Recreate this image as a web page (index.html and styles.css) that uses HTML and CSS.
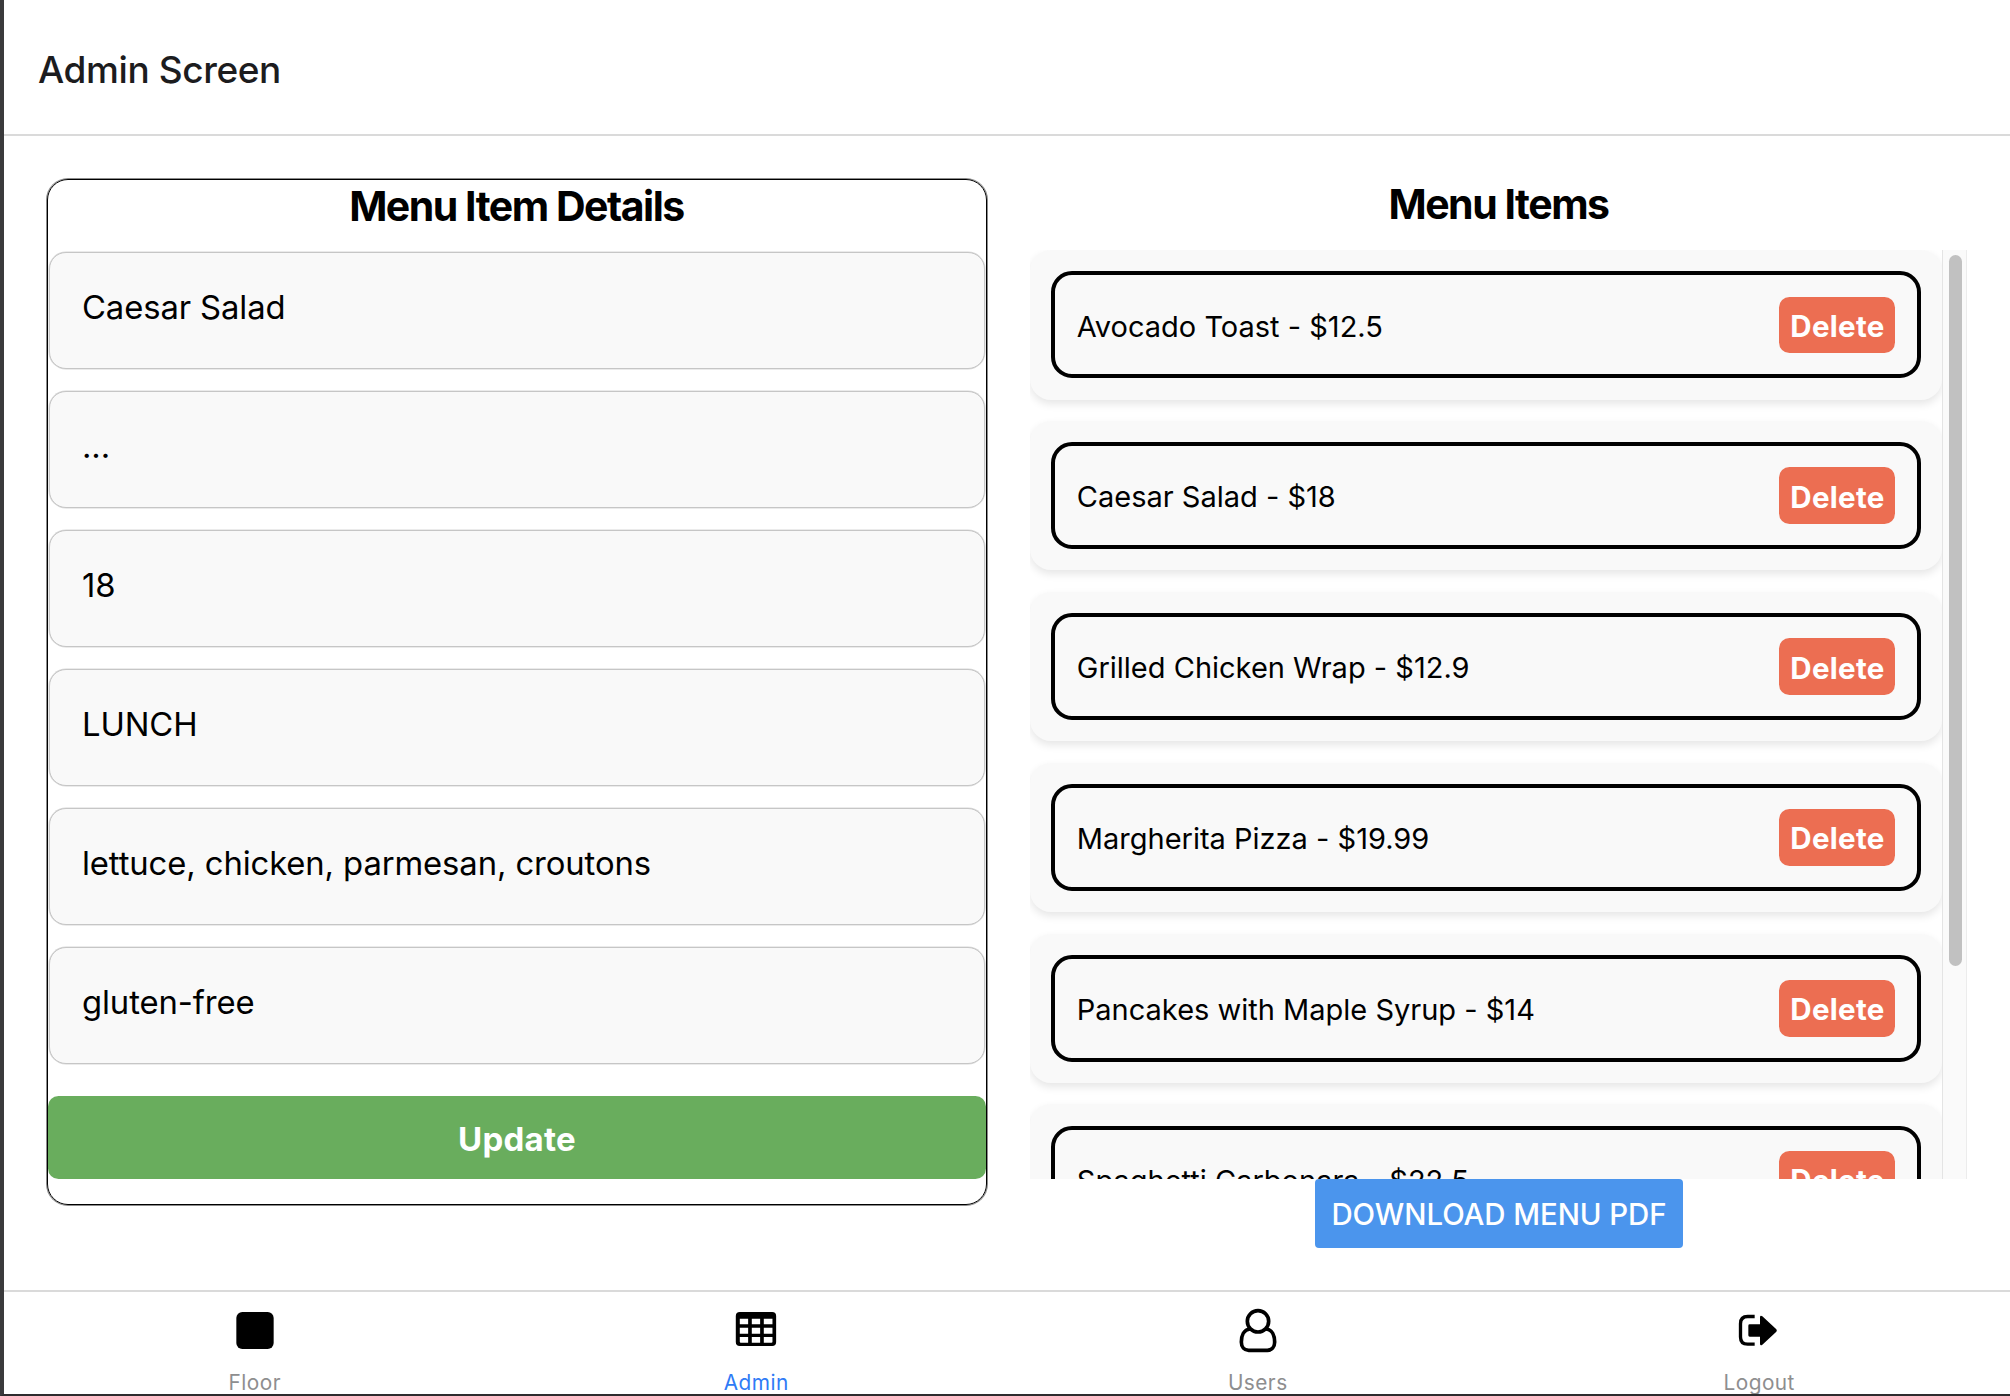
FILE: index.html
```html
<!DOCTYPE html>
<html lang="en">
<head>
<meta charset="utf-8">
<title>Admin Screen</title>
<link rel="stylesheet" href="styles.css">
</head>
<body>
<header class="header"><h1 class="header-title">Admin Screen</h1></header>
<main class="main">
  <section class="details">
    <h2 class="title">Menu Item Details</h2>
    <div class="fields">
      <div class="field">Caesar Salad</div>
      <div class="field">...</div>
      <div class="field">18</div>
      <div class="field">LUNCH</div>
      <div class="field">lettuce, chicken, parmesan, croutons</div>
      <div class="field">gluten-free</div>
    </div>
    <button class="update">Update</button>
  </section>
  <section class="items">
    <h2 class="title">Menu Items</h2>
    <div class="scroller">
      <div class="list">
        <div class="card"><div class="item"><span class="item-name">Avocado Toast - $12.5</span><button class="delete">Delete</button></div></div>
        <div class="card"><div class="item"><span class="item-name">Caesar Salad - $18</span><button class="delete">Delete</button></div></div>
        <div class="card"><div class="item"><span class="item-name">Grilled Chicken Wrap - $12.9</span><button class="delete">Delete</button></div></div>
        <div class="card"><div class="item"><span class="item-name">Margherita Pizza - $19.99</span><button class="delete">Delete</button></div></div>
        <div class="card"><div class="item"><span class="item-name">Pancakes with Maple Syrup - $14</span><button class="delete">Delete</button></div></div>
        <div class="card"><div class="item"><span class="item-name">Spaghetti Carbonara - $22.5</span><button class="delete">Delete</button></div></div>
      </div>
      <div class="track"><div class="thumb"></div></div>
    </div>
    <button class="download">DOWNLOAD MENU PDF</button>
  </section>
</main>
<nav class="tabs">
  <a class="tab">
    <svg class="icon" viewBox="92 51 144 144"><rect x="108" y="66" width="112" height="111" rx="18"/></svg>
    <span class="label">Floor</span>
  </a>
  <a class="tab tab-active">
    <svg class="icon" viewBox="96.6 51 144 144"><path fill-rule="evenodd" d="M120 66H217Q229 66 229 78V156Q229 168 217 168H120Q108 168 108 156V78Q108 66 120 66ZM120 86V103H145V86ZM156 86V103H181V86ZM192 86V103H218V86ZM120 113V131H145V113ZM156 113V131H181V113ZM192 113V131H218V113ZM120 141V155Q120 158 123 158H145V141ZM156 141V158H181V141ZM192 141V158H215Q218 158 218 155V141Z"/></svg>
    <span class="label">Admin</span>
  </a>
  <a class="tab">
    <svg class="icon" viewBox="101 51 144 144"><g fill="none" stroke="#000" stroke-width="11"><circle cx="173" cy="94" r="32"/><path d="M149 117C130 119 123 137 123 156C123 171 132 181 145 181H201C214 181 223 171 223 156C223 137 216 119 197 117"/></g></svg>
    <span class="label">Users</span>
  </a>
  <a class="tab">
    <svg class="icon" viewBox="106 51 144 144"><path fill="none" stroke="#000" stroke-width="10" d="M165 79.5H144Q122.500 79.500 122.500 101V141Q122.500 162.500 144 162.500H165"/><path d="M150 103H181V81Q182 75 188 79L230 118Q233 121.500 230 125L188 164Q182 168 181 162V140H150Q146 140 146 136V107Q146 103 150 103Z"/></svg>
    <span class="label">Logout</span>
  </a>
</nav>
</body>
</html>
```
FILE: styles.css
```css
* { box-sizing: border-box; }

body {
  margin: 0;
  width: 2010px;
  height: 1396px;
  display: flex;
  flex-direction: column;
  overflow: hidden;
  background: #fff;
  border-left: 4px solid #3a3a3c;
  border-bottom: 2px solid #2e2c2e;
  font-family: Inter, "Liberation Sans", sans-serif;
  font-feature-settings: "calt" 0;
  color: #000;
}

button {
  border: 0;
  padding: 0;
  margin: 0;
  font-family: inherit;
  color: #fff;
}

.header {
  flex: none;
  height: 136px;
  padding: 4px 0 0 34px;
  display: flex;
  align-items: center;
  border-bottom: 2px solid #dadada;
}

.header-title {
  margin: 0;
  font-size: 37px;
  font-weight: 500;
  letter-spacing: -0.4px;
  color: #1c1c1e;
}

.main {
  flex: none;
  height: 1154px;
  padding: 43px 42px 0 43px;
  display: flex;
  align-items: flex-start;
  gap: 43px;
}

.title {
  flex: none;
  margin: 0;
  padding-right: 1px;
  font-size: 41px;
  line-height: 51px;
  font-weight: 700;
  letter-spacing: -1.48px;
  text-align: center;
}

.details {
  width: 940px;
  height: 1026px;
  display: flex;
  flex-direction: column;
  border: 1px solid #000;
  border-radius: 21px;
  box-shadow: 0 0 0 1px rgba(0, 0, 0, 0.45);
}

.details .title { padding-top: 1px; }

.fields {
  display: flex;
  flex-direction: column;
  gap: 22px;
  padding: 20px 1px 0;
}

.field {
  height: 117px;
  display: flex;
  align-items: center;
  padding: 0 32px 7px;
  border: 1px solid #c6c6c6;
  border-radius: 17px;
  background: #f9f9f9;
  box-shadow: 0 0 0 0.5px #d8d8d8;
  font-size: 32.8px;
  letter-spacing: -0.1px;
}

.update {
  height: 83px;
  margin-top: 32px;
  padding-top: 3px;
  border-radius: 10.5px;
  background: #69ad5d;
  font-size: 33px;
  font-weight: 750;
  letter-spacing: 0.25px;
}

.items {
  width: 938px;
  display: flex;
  flex-direction: column;
}

.scroller {
  height: 929px;
  margin-top: 20px;
  display: flex;
  overflow: hidden;
}

.list {
  width: 912px;
  height: 929px;
  display: flex;
  flex-direction: column;
  gap: 21.4px;
  overflow: hidden;
}

.card {
  flex: none;
  height: 149.5px;
  padding: 21.3px;
  border-radius: 21px;
  background: #f9f9f9;
  box-shadow: 0 4px 8px rgba(0, 0, 0, 0.1);
}

.item {
  height: 107px;
  padding: 0 21.5px;
  display: flex;
  align-items: center;
  justify-content: space-between;
  border: 4px solid #000;
  border-radius: 21px;
}

.item-name {
  padding-top: 2.5px;
  font-size: 29px;
}

.delete {
  width: 116.5px;
  height: 56.5px;
  padding: 2px 0 0 1px;
  border-radius: 10.5px;
  background: #ec6e52;
  font-size: 29.5px;
  font-weight: 750;
  letter-spacing: 0.3px;
}

.track {
  width: 25px;
  padding: 5px 5px 0 6px;
  background: #fafafa;
  border-left: 1px solid #e4e4e4;
  border-right: 1px solid #ececec;
}

.thumb {
  width: 13px;
  height: 711px;
  border-radius: 7px;
  background: #c1c1c1;
}

.download {
  align-self: center;
  width: 368px;
  height: 68.5px;
  padding-top: 2px;
  border-radius: 4px;
  background: #4b95ed;
  font-size: 29.4px;
  font-weight: 500;
  letter-spacing: -0.06px;
}

.tabs {
  flex: none;
  height: 104px;
  display: flex;
  overflow: hidden;
  border-top: 2px solid #dadada;
}

.tab {
  flex: 1;
  padding-top: 15px;
  display: flex;
  flex-direction: column;
  align-items: center;
  color: #8e8e8f;
}

.tab-active { color: #2f7bf6; }

.icon {
  flex: none;
  width: 48px;
  height: 48px;
  fill: #000;
}

.label {
  margin-top: 15.5px;
  font-size: 20.8px;
  line-height: 24px;
  letter-spacing: 0.45px;
}
```
